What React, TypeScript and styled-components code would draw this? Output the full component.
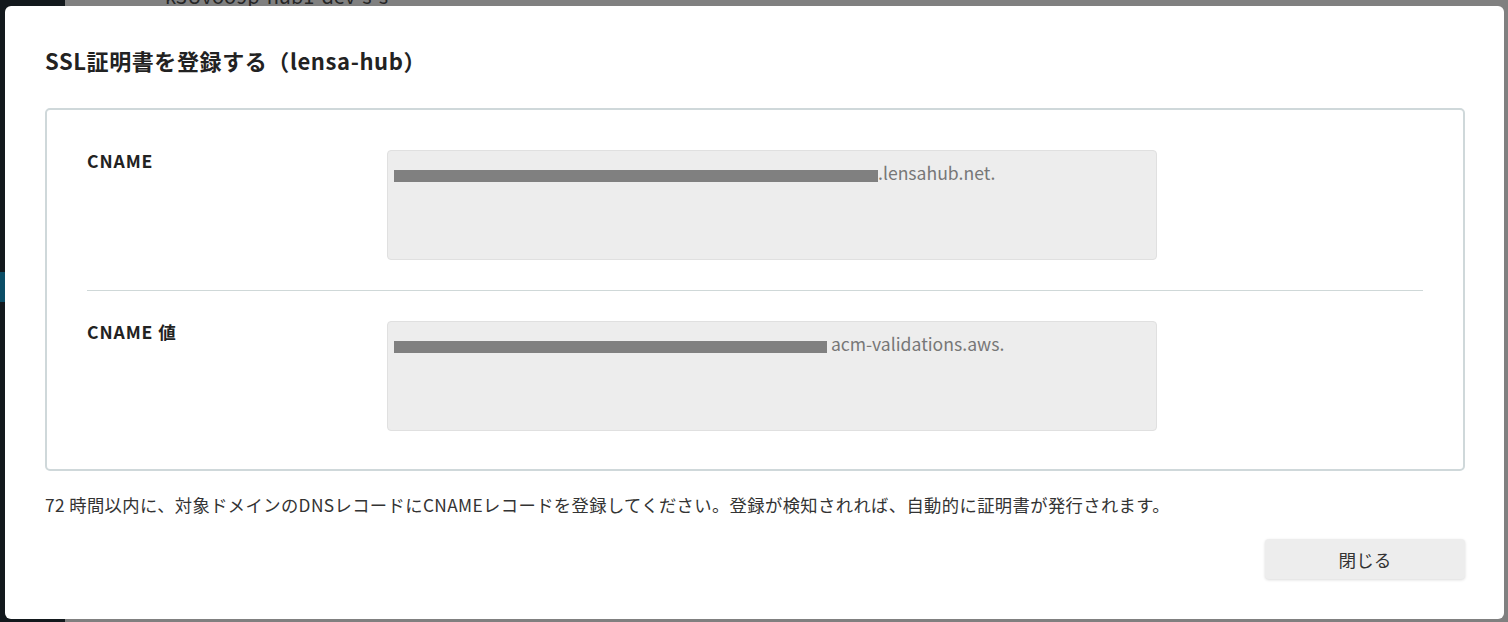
import React from "react";
import styled, { createGlobalStyle } from "styled-components";

const GlobalStyle = createGlobalStyle`
  html, body { margin: 0; padding: 0; }
  body {
    background: #808080;
    font-family: "Noto Sans CJK JP", "Noto Sans", sans-serif;
    overflow: hidden;
  }
  * { box-sizing: border-box; }
`;

const Page = styled.div`
  display: grid;
  grid-template-columns: 65px 1fr;
  width: 1508px;
  height: 622px;
  overflow: hidden;
`;

const Sidebar = styled.aside`
  background: #13191d;
  display: flex;
  flex-direction: column;
  padding-top: 272px;
`;

const SidebarMark = styled.div`
  width: 5px;
  height: 30px;
  background: #0b4d66;
`;

const Main = styled.main`
  background: #808080;
  overflow: hidden;
`;

const BgHeader = styled.div`
  margin: -14px 0 0 100px;
  font-size: 20px;
  line-height: 20px;
  color: #262626;
`;

const Overlay = styled.div`
  position: fixed;
  inset: 0;
  display: flex;
  padding: 6px 4px 3px 5px;
`;

const Modal = styled.section`
  flex: 1;
  display: flex;
  flex-direction: column;
  background: #fff;
  border-radius: 6px;
  padding: 40px 39px 40px 40px;
`;

const Title = styled.h2`
  margin: 0;
  font-size: 22px;
  font-weight: 700;
  line-height: 28px;
  letter-spacing: 0.6px;
  color: #222;
`;

const Panel = styled.div`
  margin-top: 34px;
  border: 2px solid #cfd8da;
  border-radius: 5px;
  padding: 40px 40px 38px;
`;

const Row = styled.div`
  display: grid;
  grid-template-columns: 300px 770px;
`;

const Label = styled.div`
  font-size: 17.6px;
  font-weight: 700;
  line-height: 22px;
  letter-spacing: 0.9px;
  color: #222;
`;

const Field = styled.div`
  height: 110px;
  background: #ededed;
  border: 1px solid #e0e0e0;
  border-radius: 4px;
  padding: 11px 6px;
  font-size: 17.6px;
  line-height: 22px;
  color: #777;
  white-space: nowrap;
`;

const Redact = styled.span<{ $w: number }>`
  display: inline-block;
  width: ${(p) => p.$w}px;
  height: 12px;
  background: #808080;
  vertical-align: -2px;
`;

const Divider = styled.hr`
  border: 0;
  height: 1px;
  background: #cfd8d8;
  margin: 30px 0;
`;

const Note = styled.p`
  margin: 22px 0 0;
  font-size: 17.3px;
  line-height: 24px;
  letter-spacing: 0.4px;
  color: #333;
`;

const Actions = styled.div`
  display: flex;
  justify-content: flex-end;
  margin-top: 22px;
`;

const Button = styled.button`
  width: 200px;
  height: 40px;
  border: none;
  border-radius: 4px;
  background: #ededed;
  box-shadow: 0 1px 3px rgba(0, 0, 0, 0.15);
  font-family: inherit;
  font-size: 17.6px;
  color: #333;
  cursor: pointer;
`;

export default function App() {
  return (
    <>
      <GlobalStyle />
      <Page>
        <Sidebar>
          <SidebarMark />
        </Sidebar>
        <Main>
          <BgHeader>k3Uvoo9p-hub1-dev-s-s-</BgHeader>
        </Main>
      </Page>
      <Overlay>
        <Modal>
          <Title>SSL証明書を登録する（lensa-hub）</Title>
          <Panel>
            <Row>
              <Label>CNAME</Label>
              <Field>
                <Redact $w={484} />
                .lensahub.net.
              </Field>
            </Row>
            <Divider />
            <Row>
              <Label>CNAME 値</Label>
              <Field>
                <Redact $w={433} /> acm-validations.aws.
              </Field>
            </Row>
          </Panel>
          <Note>
            72 時間以内に、対象ドメインのDNSレコードにCNAMEレコードを登録してください。登録が検知されれば、自動的に証明書が発行されます。
          </Note>
          <Actions>
            <Button>閉じる</Button>
          </Actions>
        </Modal>
      </Overlay>
    </>
  );
}
